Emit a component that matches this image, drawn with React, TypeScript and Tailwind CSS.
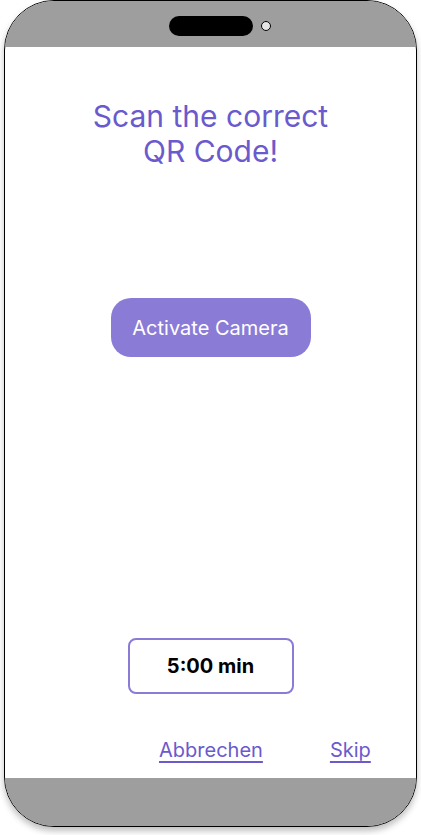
export default function App() {
    return (
        <div className="w-[421px] h-[835px] bg-white" style={{ fontFamily: 'Inter, "Noto Sans", sans-serif' }}>
            {/* Phone frame */}
            <div className="ml-[4px] w-[413px] h-[827px] rounded-[50px] border border-black overflow-hidden flex flex-col bg-white shadow-[0_4px_6px_rgba(0,0,0,0.25)]">
                {/* Top bar with notch */}
                <div className="h-[46px] bg-[#9e9e9e] flex items-start justify-center pt-[15px] shrink-0">
                    <div className="relative">
                        <div className="w-[84px] h-[20px] rounded-full bg-black" />
                        <div className="absolute left-[92px] top-[5px] w-[10px] h-[10px] rounded-full bg-[#e6e6e6] border border-black" />
                    </div>
                </div>

                {/* Screen */}
                <div className="flex-1 flex flex-col items-center">
                    <h1 className="mt-[52px] text-[30px] leading-[35px] text-[#6a5acd] text-center font-normal">
                        Scan the correct
                        <br />
                        QR Code!
                    </h1>

                    <button className="mt-[129px] w-[200px] h-[59px] rounded-[20px] bg-[#8a7bd7] text-white text-[20px]">
                        Activate Camera
                    </button>

                    <div className="mt-[281px] w-[166px] h-[56px] rounded-[8px] border-2 border-[#8a7bd7] flex items-center justify-center text-[20px] font-bold text-black">
                        5:00 min
                    </div>

                    <div className="mt-[41px] w-full flex items-center pl-[154px] gap-[67px] text-[20px] text-[#6a5acd]">
                        <a className="underline underline-offset-[4px]" href="#">Abbrechen</a>
                        <a className="underline underline-offset-[4px]" href="#">Skip</a>
                    </div>
                </div>

                {/* Bottom bar */}
                <div className="h-[48px] bg-[#9e9e9e] shrink-0" />
            </div>
        </div>
    );
}
